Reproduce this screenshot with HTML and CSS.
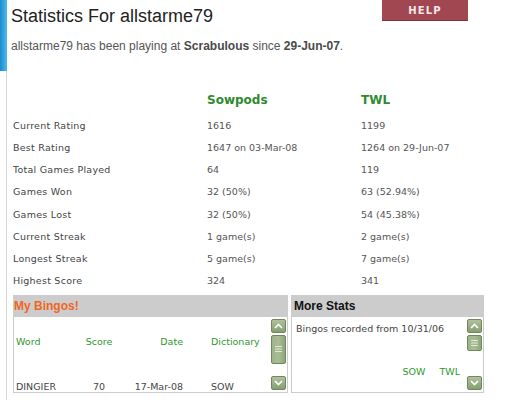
FILE: index.html
```html
<!DOCTYPE html>
<html>
<head>
<meta charset="utf-8">
<link rel="stylesheet" href="styles.css">
</head>
<body>
<div class="page">
  <div class="rail"><div class="rail-top"></div><div class="rail-rest"></div></div>
  <main class="main">
    <header class="top">
      <h1 class="title">Statistics For allstarme79</h1>
      <a class="help">HELP</a>
    </header>
    <p class="intro">allstarme79 has been playing at <b>Scrabulous</b> since <b>29-Jun-07</b>.</p>

    <div class="stats">
      <div class="stats-head"><span></span><span>Sowpods</span><span>TWL</span></div>
      <div class="stats-row"><span class="lbl">Current Rating</span><span>1616</span><span>1199</span></div>
      <div class="stats-row"><span class="lbl">Best Rating</span><span>1647 on 03-Mar-08</span><span>1264 on 29-Jun-07</span></div>
      <div class="stats-row"><span class="lbl">Total Games Played</span><span>64</span><span>119</span></div>
      <div class="stats-row"><span class="lbl">Games Won</span><span>32 (50%)</span><span>63 (52.94%)</span></div>
      <div class="stats-row"><span class="lbl">Games Lost</span><span>32 (50%)</span><span>54 (45.38%)</span></div>
      <div class="stats-row"><span class="lbl">Current Streak</span><span>1 game(s)</span><span>2 game(s)</span></div>
      <div class="stats-row"><span class="lbl">Longest Streak</span><span>5 game(s)</span><span>7 game(s)</span></div>
      <div class="stats-row"><span class="lbl">Highest Score</span><span>324</span><span>341</span></div>
    </div>

    <div class="panels">
      <section class="panel bingos">
        <div class="panel-head orange">My Bingos!</div>
        <div class="panel-body">
          <div class="bingo-grid">
            <span class="g">Word</span><span class="g c">Score</span><span class="g r">Date</span><span class="g d">Dictionary</span>
            <span>DINGIER</span><span class="c">70</span><span class="r">17-Mar-08</span><span class="d">SOW</span>
          </div>
          <div class="sb">
            <div class="sb-btn"><svg width="9" height="6" viewBox="0 0 9 6"><polyline points="1,5 4.5,1.5 8,5" fill="none" stroke="#fff" stroke-width="1.7"/></svg></div>
            <div class="sb-thumb tall"><svg width="7" height="6" viewBox="0 0 7 6"><path d="M0 0.5H7M0 3H7M0 5.5H7" stroke="#dfe8d4" stroke-width="1"/></svg></div>
            <div class="sb-space"></div>
            <div class="sb-btn"><svg width="9" height="6" viewBox="0 0 9 6"><polyline points="1,1 4.5,4.5 8,1" fill="none" stroke="#fff" stroke-width="1.7"/></svg></div>
          </div>
        </div>
      </section>
      <section class="panel more">
        <div class="panel-head">More Stats</div>
        <div class="panel-body">
          <div class="more-body">
            <div class="line">Bingos recorded from 10/31/06</div>
            <div class="dicts"><span>SOW</span><span>TWL</span></div>
          </div>
          <div class="sb">
            <div class="sb-btn"><svg width="9" height="6" viewBox="0 0 9 6"><polyline points="1,5 4.5,1.5 8,5" fill="none" stroke="#fff" stroke-width="1.7"/></svg></div>
            <div class="sb-thumb short"><svg width="7" height="6" viewBox="0 0 7 6"><path d="M0 0.5H7M0 3H7M0 5.5H7" stroke="#dfe8d4" stroke-width="1"/></svg></div>
            <div class="sb-space"></div>
            <div class="sb-btn"><svg width="9" height="6" viewBox="0 0 9 6"><polyline points="1,1 4.5,4.5 8,1" fill="none" stroke="#fff" stroke-width="1.7"/></svg></div>
          </div>
        </div>
      </section>
    </div>
  </main>
</div>
</body>
</html>
```

FILE: styles.css
```css
* { box-sizing: border-box; }
html, body { margin: 0; padding: 0; background: #fff; }
body { font-family: "Liberation Sans", Arial, sans-serif; color: #444; }

.page { display: flex; min-height: 400px; }

.rail { width: 7px; flex: none; display: flex; flex-direction: column; }
.rail-top { height: 71px; background: linear-gradient(to right, #1a8ccf, #4fb9ea); }
.rail-rest { flex: 1; border-right: 1px solid #d6d6d6; }

.main { flex: 1; padding-left: 4px; }

.top { display: flex; align-items: flex-start; }
.title { margin: 0; padding-top: 5px; font-size: 18px; line-height: 22px; font-weight: normal; color: #222; }
.help {
  margin-left: auto; margin-right: 37px;
  width: 86px; height: 21px;
  background: #a04751; border-bottom: 1px solid #7c333b;
  color: #f6e8e8; font: bold 10px "DejaVu Sans", sans-serif; letter-spacing: 1.2px;
  display: flex; align-items: center; justify-content: center;
  text-decoration: none;
}

.intro { margin: 11.5px 0 0; font-size: 12px; line-height: 15px; color: #555; }
.intro b { color: #4a4a4a; }

.stats { margin: 35.4px 0 0 2px; font-family: "DejaVu Sans", Verdana, sans-serif; }
.stats-head, .stats-row { display: grid; grid-template-columns: 194px 154px 1fr; }
.stats-head { height: 26px; line-height: 22px; font-size: 12px; font-weight: bold; color: #2e8b2e; }
.stats-row { height: 22.2px; line-height: 22.2px; font-size: 9.5px; color: #555; white-space: nowrap; }
.stats-row .lbl { color: #444; letter-spacing: 0.25px; }

.panels { display: flex; gap: 3px; margin: 2.5px 0 0 2px; }
.panel { background: #cccccc; display: flex; flex-direction: column; padding: 0 1px 1px; height: 98px; }
.bingos { width: 275px; }
.more { width: 193px; }
.panel-head { height: 22px; line-height: 22px; font-size: 12px; font-weight: bold; color: #111; padding-left: 2px; flex: none; }
.panel-head.orange { color: #f0661c; padding-left: 0; }
.panel-body { flex: 1; background: #fff; display: flex; overflow: hidden; font-family: "DejaVu Sans", Verdana, sans-serif; font-size: 9.5px; color: #444; }

.bingo-grid {
  flex: 1; padding: 14px 0 0 2px;
  display: grid; grid-template-columns: 68px 30px 69px 1fr;
  grid-auto-rows: 22px; row-gap: 23.5px; line-height: 22px; white-space: nowrap;
}
.bingo-grid .g { color: #2f972f; }
.bingo-grid .c { text-align: center; }
.bingo-grid .r { text-align: right; }
.bingo-grid .d { padding-left: 28px; }

.more-body { flex: 1; padding: 1.6px 0 0 4px; }
.more-body .line { line-height: 22.2px; white-space: nowrap; }
.dicts { margin-top: 20.3px; line-height: 22.2px; display: flex; justify-content: flex-end; gap: 14px; padding-right: 7px; color: #2f972f; }

.sb { width: 15px; margin-right: 1px; padding: 2px 0; display: flex; flex-direction: column; gap: 2px; flex: none; }
.sb-btn {
  height: 14px; flex: none;
  border: 1px solid #6e875b; border-radius: 2px;
  background: linear-gradient(#b0c19e, #869f70);
  display: flex; align-items: center; justify-content: center;
}
.sb-thumb {
  flex: none; border: 1px solid #6e875b; border-radius: 2px;
  background: linear-gradient(to right, #9fb48b, #a9bc96 50%, #8fa67b);
  display: flex; align-items: center; justify-content: center;
}
.sb-thumb.tall { height: 29px; }
.sb-thumb.short { height: 16px; }
.sb-space { flex: 1; }
```
